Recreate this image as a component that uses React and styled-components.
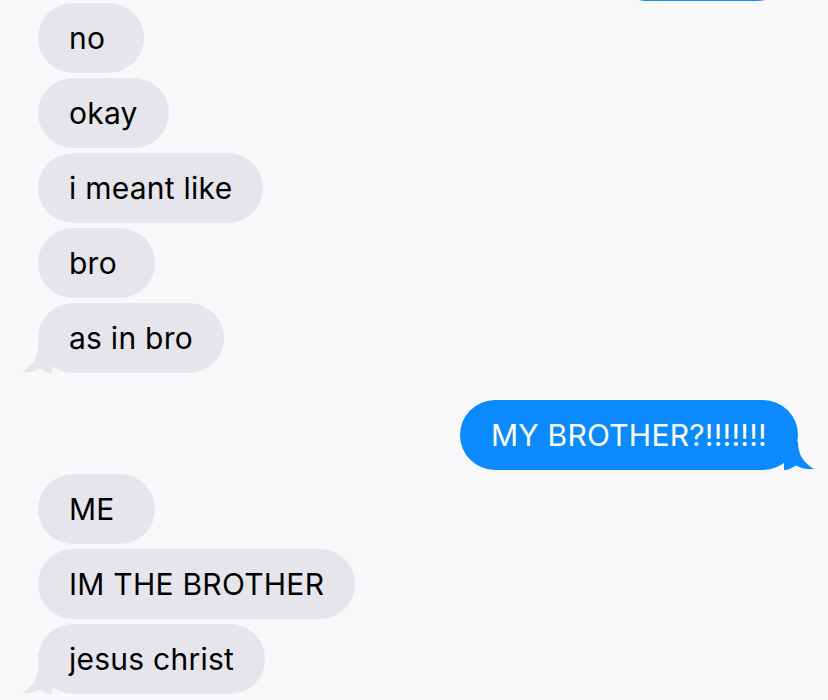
import React from 'react';
import styled, {createGlobalStyle} from "styled-components";

const GlobalStyle = createGlobalStyle`
  html, body {
    margin: 0;
    padding: 0;
    background: #f8f8fa;
    overflow: hidden;
  }
`
const Thread = styled.div`
  width: 828px;
  height: 700px;
  overflow: hidden;
  box-sizing: border-box;
  padding: 0 30px 0 38px;
  display: flex;
  flex-direction: column;
  font-family: Inter, "Open Sans", "Liberation Sans", sans-serif;
`
const Row = styled.div`
  display: flex;
  justify-content: ${props => props.$sent ? 'flex-end' : 'flex-start'};
  margin-top: ${props => props.$gap}px;
  padding-right: ${props => props.$inset || 0}px;
  flex-shrink: 0;
`
const Bubble = styled.div`
  position: relative;
  height: 70px;
  min-width: ${props => props.$width || 0}px;
  box-sizing: border-box;
  padding: 0 ${props => 31 + (props.$extra || 0)}px 0 31px;
  border-radius: 35px;
  background: ${props => props.$sent ? '#0a8afe' : '#e6e5eb'};
  color: ${props => props.$sent ? '#ffffff' : '#000000'};
  font-size: 30px;
  line-height: 70px;
  white-space: nowrap;
  letter-spacing: 0.25px;
`
const Tail = styled.svg`
  position: absolute;
  bottom: 0;
  ${props => props.$sent ? 'right: -16px; transform: scaleX(-1);' : 'left: -16px;'}
  width: 30px;
  height: 28px;
`

const messages = [
    {text: '', sent: true, gap: -69, width: 180, inset: 6},
    {text: 'no', gap: 2, extra: 8},
    {text: 'okay', gap: 5},
    {text: 'i meant like', gap: 5},
    {text: 'bro', gap: 5, extra: 7},
    {text: 'as in bro', gap: 5, tail: true},
    {text: 'MY BROTHER?!!!!!!!', sent: true, gap: 27, tail: true},
    {text: 'ME', gap: 4, extra: 9},
    {text: 'IM THE BROTHER', gap: 5},
    {text: 'jesus christ', gap: 5, tail: true},
]

const BubbleTail = ({sent}) => (
    <Tail $sent={sent} viewBox="0 0 30 28">
        <path
            d="M16 0 C16 13 10 21 0 27 C7 27.6 13 26.5 18 23.5 C22 26 26 28 30 28 L30 0 Z"
            fill={sent ? '#0a8afe' : '#e6e5eb'}
        />
    </Tail>
)

const App = () => {
    return (
        <>
            <GlobalStyle/>
            <Thread>
                {messages.map((m, i) => (
                    <Row key={i} $sent={m.sent} $gap={m.gap} $inset={m.inset}>
                        <Bubble $sent={m.sent} $width={m.width} $extra={m.extra}>
                            {m.text}
                            {m.tail && <BubbleTail sent={m.sent}/>}
                        </Bubble>
                    </Row>
                ))}
            </Thread>
        </>
    )
}
export default App
